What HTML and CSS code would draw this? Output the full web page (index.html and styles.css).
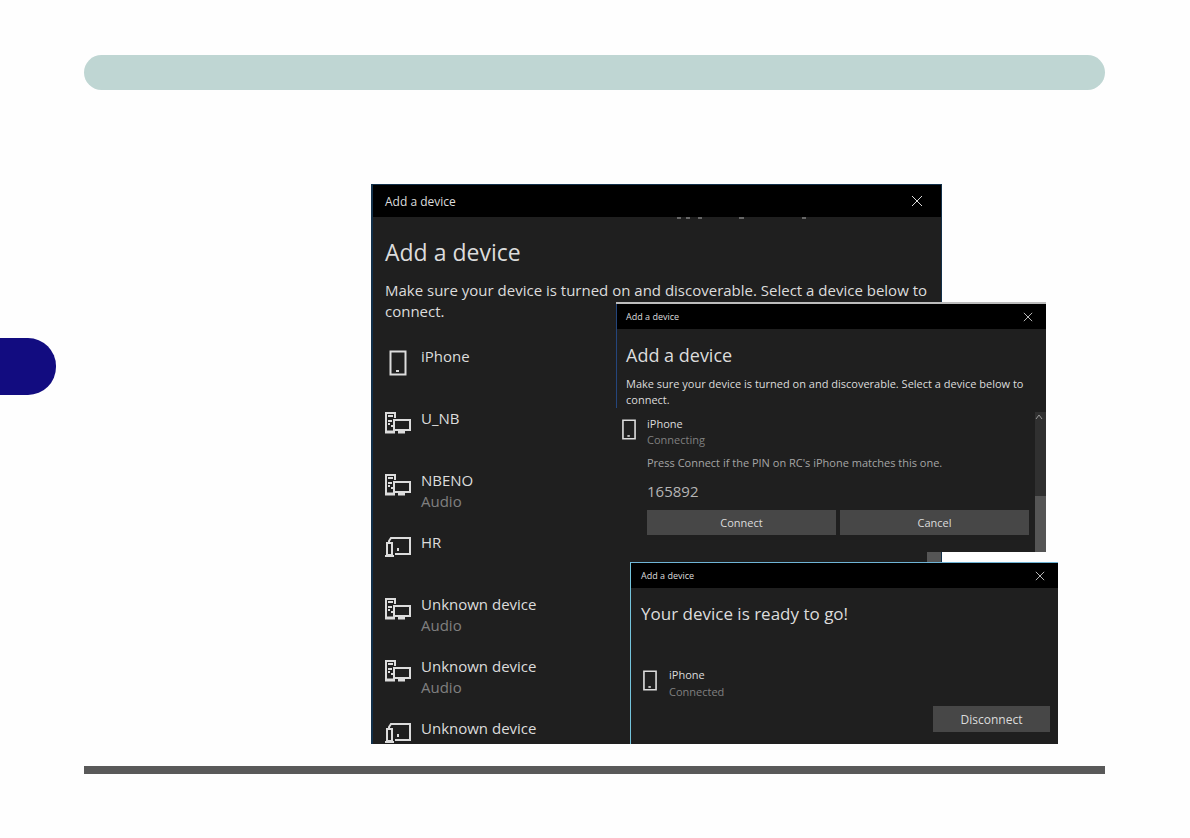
FILE: index.html
```html
<!DOCTYPE html>
<html lang="en">
<head>
    <meta charset="UTF-8">
    <meta name="viewport" content="width=device-width, initial-scale=1.0">
    <title>Add a device</title>
    <link rel="stylesheet" href="styles.css">
</head>
<body>
    <svg class="symbols" aria-hidden="true">
        <symbol id="phone" viewBox="0 0 18 26">
            <path d="M1.5 1.5h15v23h-15z" fill="none" stroke="currentColor" stroke-width="2"/>
            <path d="M7 20h3v2H7z" fill="currentColor"/>
        </symbol>
        <symbol id="desktop" viewBox="0 0 26 22">
            <path d="M10 6V1H1v19h8" fill="none" stroke="currentColor" stroke-width="2"/>
            <path d="M3 4h5M3 9h4M3 12h2M6 14h2" stroke="currentColor" stroke-width="2"/>
            <path d="M9 8h16v10H9z" fill="none" stroke="currentColor" stroke-width="2"/>
            <path d="M0 20h10M13 20h7" stroke="currentColor" stroke-width="3"/>
        </symbol>
        <symbol id="laptop" viewBox="0 0 26 22">
            <path d="M4 7V5l2-3h19v16H10" fill="none" stroke="currentColor" stroke-width="2"/>
            <path d="M2 7h5v12H2z" fill="none" stroke="currentColor" stroke-width="2"/>
            <path d="M0 20h9" stroke="currentColor" stroke-width="2"/>
            <path d="M12 12h2v3h-2z" fill="currentColor"/>
        </symbol>
        <symbol id="close" viewBox="0 0 12 12">
            <path d="M1 1l10 10M11 1L1 11" fill="none" stroke="currentColor"/>
        </symbol>
    </svg>

    <div class="page">
        <aside class="rail">
            <div class="tab"></div>
        </aside>
        <main class="sheet">
            <div class="header-bar"></div>

            <div class="figure">
                <section class="window window-list">
                    <div class="titlebar">
                        <span>Add a device</span>
                        <button class="close" type="button" aria-label="Close"><svg><use href="#close"/></svg></button>
                    </div>
                    <svg class="specks" viewBox="0 0 140 4" aria-hidden="true">
                        <path d="M5 1h4M14 1h4M26 1h4M67 1h5M130 1h4" stroke="#666" stroke-width="2"/>
                    </svg>
                    <h1>Add a device</h1>
                    <p class="intro">Make sure your device is turned on and discoverable. Select a device below to connect.</p>
                    <ul class="devices">
                        <li><svg class="icon phone"><use href="#phone"/></svg><div>iPhone</div></li>
                        <li><svg class="icon"><use href="#desktop"/></svg><div>U_NB</div></li>
                        <li><svg class="icon"><use href="#desktop"/></svg><div>NBENO<small>Audio</small></div></li>
                        <li><svg class="icon"><use href="#laptop"/></svg><div>HR</div></li>
                        <li><svg class="icon"><use href="#desktop"/></svg><div>Unknown device<small>Audio</small></div></li>
                        <li><svg class="icon"><use href="#desktop"/></svg><div>Unknown device<small>Audio</small></div></li>
                        <li><svg class="icon"><use href="#laptop"/></svg><div>Unknown device</div></li>
                    </ul>
                    <div class="scroll-end"></div>
                </section>

                <section class="window window-pin">
                    <div class="titlebar">
                        <span>Add a device</span>
                        <button class="close" type="button" aria-label="Close"><svg><use href="#close"/></svg></button>
                    </div>
                    <h2>Add a device</h2>
                    <p class="intro">Make sure your device is turned on and discoverable. Select a device below to connect.</p>
                    <div class="pairing">
                        <svg class="icon phone"><use href="#phone"/></svg>
                        <div class="details">
                            <div>iPhone</div>
                            <small>Connecting</small>
                            <p class="prompt">Press Connect if the PIN on RC's iPhone matches this one.</p>
                            <p class="pin">165892</p>
                            <div class="actions">
                                <button type="button">Connect</button>
                                <button type="button">Cancel</button>
                            </div>
                        </div>
                        <div class="scrollbar">
                            <svg class="up" viewBox="0 0 8 6"><path d="M1 5l3-4 3 4" fill="none" stroke="#999"/></svg>
                            <div class="thumb"></div>
                        </div>
                    </div>
                </section>

                <section class="window window-ready">
                    <div class="titlebar">
                        <span>Add a device</span>
                        <button class="close" type="button" aria-label="Close"><svg><use href="#close"/></svg></button>
                    </div>
                    <h2>Your device is ready to go!</h2>
                    <div class="connected">
                        <svg class="icon phone"><use href="#phone"/></svg>
                        <div>
                            <div>iPhone</div>
                            <small>Connected</small>
                        </div>
                    </div>
                    <div class="footer">
                        <button type="button">Disconnect</button>
                    </div>
                </section>
            </div>

            <div class="footer-rule"></div>
        </main>
    </div>
</body>
</html>
```

FILE: styles.css
```css
* {
    box-sizing: border-box;
}
body {
    margin: 0;
    background: #fefefe;
    color: #dcdcdc;
    font-family: 'Open Sans', 'Noto Sans', sans-serif;
}
h1, h2, p, ul {
    margin: 0;
    padding: 0;
    font-weight: 400;
}
button {
    border: none;
    padding: 0;
    color: inherit;
    font-family: inherit;
}
small {
    display: block;
    color: #808080;
    font-size: inherit;
}
.symbols {
    display: none;
}
.page {
    display: flex;
}
.rail {
    flex: none;
    width: 84px;
    padding-top: 338px;
}
.tab {
    width: 56px;
    height: 57px;
    border-radius: 0 28px 28px 0;
    background: #120c80;
}
.sheet {
    flex: 1;
    padding: 55px 85px 40px 0;
}
.header-bar {
    height: 35px;
    border-radius: 18px;
    background: #bfd6d3;
}
.footer-rule {
    height: 8px;
    margin-top: 22px;
    background: #595959;
}
.figure {
    position: relative;
    width: 687px;
    margin: 94px 0 0 287px;
}

/* windows */
.window {
    overflow: hidden;
    background: #1f1f1f;
}
.titlebar {
    display: flex;
    align-items: center;
    justify-content: space-between;
    background: #000;
}
.close {
    display: flex;
    background: none;
}
.close svg {
    width: 12px;
    height: 12px;
}
.icon {
    flex: none;
    width: 26px;
    height: 22px;
}

/* device list */
.window-list {
    position: relative;
    width: 571px;
    height: 560px;
    border: 2px solid #12304a;
    border-width: 1px 1px 0 2px;
    font-size: 15px;
    line-height: 21px;
}
.window-list .titlebar {
    height: 32px;
    padding: 0 18px 0 12px;
    font-size: 12px;
}
.specks {
    display: block;
    width: 140px;
    height: 4px;
    margin-left: 299px;
}
.window-list h1 {
    margin: 15px 12px 0;
    font-size: 23px;
    line-height: 32px;
}
.window-list .intro {
    margin: 12px 8px 0 12px;
}
.devices {
    padding: 24px 12px 0;
    list-style: none;
}
.devices li {
    display: flex;
    gap: 10px;
    height: 62px;
}
.devices .icon {
    margin-top: 4px;
}
.devices .phone {
    height: 26px;
}
.scroll-end {
    position: absolute;
    right: 0;
    top: 367px;
    width: 14px;
    height: 12px;
    background: #555;
}

/* pin prompt */
.window-pin {
    position: absolute;
    left: 245px;
    top: 118px;
    width: 430px;
    height: 250px;
    border-top: 2px solid #bcbcbc;
    background: linear-gradient(#24457c, #24457c) 0 0 / 1px 104px no-repeat #1f1f1f;
    font-size: 11px;
    line-height: 16px;
}
.window-pin .titlebar,
.window-ready .titlebar {
    height: 25px;
    padding: 0 13px 0 10px;
    font-size: 9px;
}
.window-pin .titlebar {
    margin-left: 1px;
    padding-left: 9px;
}
.window-pin .close svg,
.window-ready .close svg {
    width: 10px;
    height: 10px;
}
.window-pin h2,
.window-ready h2 {
    margin: 14px 10px 0;
    font-size: 18px;
    line-height: 24px;
}
.window-pin .intro {
    margin: 9px 12px 0 10px;
}
.pairing {
    display: flex;
    height: 144px;
    margin-top: 4px;
    padding-left: 4px;
}
.pairing .phone {
    width: 18px;
    height: 21px;
    margin-top: 7px;
}
.details {
    flex: 1;
    padding: 4px 6px 0 9px;
}
.prompt {
    margin-top: 7px;
    color: #a5a5a5;
}
.pin {
    margin-top: 10px;
    color: #b5b5b5;
    font-size: 15px;
    line-height: 20px;
}
.actions {
    display: flex;
    gap: 4px;
    margin-top: 9px;
}
.actions button {
    flex: 1;
    height: 25px;
    background: #474747;
    font-size: 11px;
}
.scrollbar {
    display: flex;
    flex-direction: column;
    justify-content: space-between;
    width: 11px;
    background: #303030;
}
.up {
    width: 8px;
    height: 6px;
    margin-top: 2px;
}
.thumb {
    height: 60px;
    background: #555;
}

/* connected */
.window-ready {
    position: absolute;
    left: 259px;
    top: 378px;
    width: 428px;
    height: 182px;
    border-top: 1px solid #6fb4d6;
    border-left: 1px solid #74c4dc;
    font-size: 11px;
    line-height: 17px;
}
.window-ready h2 {
    font-size: 17px;
}
.connected {
    display: flex;
    gap: 10px;
    margin-top: 40px;
    padding-left: 10px;
}
.connected .phone {
    width: 18px;
    height: 21px;
    margin-top: 4px;
}
.footer {
    display: flex;
    justify-content: flex-end;
    padding: 6px 8px 0;
}
.footer button {
    width: 117px;
    height: 26px;
    background: #474747;
    font-size: 12px;
}
```
